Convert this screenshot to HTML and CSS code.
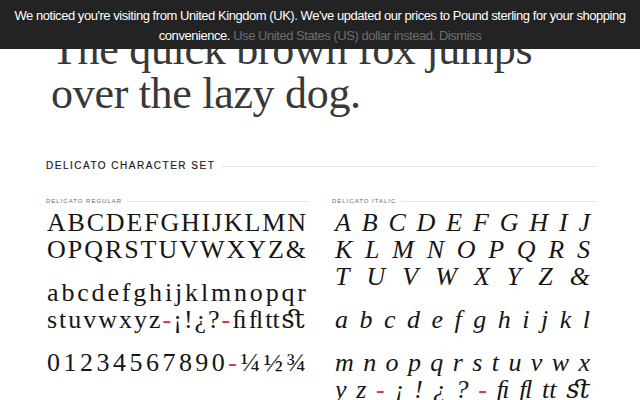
FILE: index.html
```html
<!DOCTYPE html>
<html lang="en">
<head>
<meta charset="utf-8">
<title>Delicato</title>
<link rel="stylesheet" href="styles.css">
</head>
<body>
<div class="notice">
  <p class="notice-text">We noticed you're visiting from United Kingdom (UK). We've updated our prices to Pound sterling for your shopping convenience. <a class="notice-link" href="#">Use United States (US) dollar instead.</a> <a class="notice-link" href="#">Dismiss</a></p>
</div>
<main class="page">
  <h1 class="specimen">The quick brown fox jumps<br>over the lazy dog.</h1>
  <section class="charset">
    <h2 class="section-title"><span class="section-name">DELICATO CHARACTER SET</span><span class="rule"></span></h2>
    <div class="columns">
      <div class="col regular">
        <h3 class="label"><span class="label-name">DELICATO REGULAR</span><span class="rule"></span></h3>
        <div class="block">
          <div class="row"><span>A</span><span>B</span><span>C</span><span>D</span><span>E</span><span>F</span><span>G</span><span>H</span><span>I</span><span>J</span><span>K</span><span>L</span><span>M</span><span>N</span></div>
          <div class="row"><span>O</span><span>P</span><span>Q</span><span>R</span><span>S</span><span>T</span><span>U</span><span>V</span><span>W</span><span>X</span><span>Y</span><span>Z</span><span>&amp;</span></div>
        </div>
        <div class="block">
          <div class="row"><span>a</span><span>b</span><span>c</span><span>d</span><span>e</span><span>f</span><span>g</span><span>h</span><span>i</span><span>j</span><span>k</span><span>l</span><span>m</span><span>n</span><span>o</span><span>p</span><span>q</span><span>r</span></div>
          <div class="row"><span>s</span><span>t</span><span>u</span><span>v</span><span>w</span><span>x</span><span>y</span><span>z</span><span class="dash">-</span><span>¡</span><span>!</span><span>¿</span><span>?</span><span class="dash">-</span><span>ﬁ</span><span>ﬂ</span><span>tt</span><span>ﬆ</span></div>
        </div>
        <div class="block block-last">
          <div class="row"><span>0</span><span>1</span><span>2</span><span>3</span><span>4</span><span>5</span><span>6</span><span>7</span><span>8</span><span>9</span><span>0</span><span class="dash">-</span><span>¼</span><span>½</span><span>¾</span></div>
        </div>
      </div>
      <div class="col italic">
        <h3 class="label"><span class="label-name">DELICATO ITALIC</span><span class="rule"></span></h3>
        <div class="block">
          <div class="row"><span>A</span><span>B</span><span>C</span><span>D</span><span>E</span><span>F</span><span>G</span><span>H</span><span>I</span><span>J</span></div>
          <div class="row"><span>K</span><span>L</span><span>M</span><span>N</span><span>O</span><span>P</span><span>Q</span><span>R</span><span>S</span></div>
          <div class="row"><span>T</span><span>U</span><span>V</span><span>W</span><span>X</span><span>Y</span><span>Z</span><span>&amp;</span></div>
        </div>
        <div class="block">
          <div class="row"><span>a</span><span>b</span><span>c</span><span>d</span><span>e</span><span>f</span><span>g</span><span>h</span><span>i</span><span>j</span><span>k</span><span>l</span></div>
        </div>
        <div class="block">
          <div class="row"><span>m</span><span>n</span><span>o</span><span>p</span><span>q</span><span>r</span><span>s</span><span>t</span><span>u</span><span>v</span><span>w</span><span>x</span></div>
          <div class="row"><span>y</span><span>z</span><span class="dash">-</span><span>¡</span><span>!</span><span>¿</span><span>?</span><span class="dash">-</span><span>ﬁ</span><span>ﬂ</span><span>tt</span><span>ﬆ</span></div>
        </div>
      </div>
    </div>
  </section>
</main>
</body>
</html>
```

FILE: styles.css
```css
html, body {
  margin: 0;
  padding: 0;
  background: #ffffff;
}

body {
  font-family: "Liberation Serif", "DejaVu Serif", serif;
  color: #1c1c1c;
  overflow: hidden;
}

.notice {
  position: fixed;
  top: 0;
  left: 0;
  right: 0;
  z-index: 10;
  background: #232323;
  padding: 6px 8px 3px;
  height: 40px;
}

.notice-text {
  margin: 0;
  text-align: center;
  font-family: "Liberation Sans", Arial, sans-serif;
  font-size: 13px;
  line-height: 20px;
  letter-spacing: -0.45px;
  color: #ffffff;
}

.notice-link {
  color: #6e6e6e;
  text-decoration: none;
}

.page {
  padding-top: 28px;
}

.specimen {
  margin: 0 0 0 51px;
  font-family: "Liberation Serif", "DejaVu Serif", serif;
  font-weight: normal;
  font-size: 44px;
  line-height: 44px;
  letter-spacing: -0.3px;
  color: #383838;
}

.charset {
  margin: 43px 0 0 46px;
  width: 550px;
}

.section-title {
  display: flex;
  align-items: center;
  gap: 7px;
  margin: 0;
  height: 14px;
  font-family: "Liberation Sans", Arial, sans-serif;
  font-weight: normal;
  font-size: 10px;
  line-height: 14px;
  letter-spacing: 1.5px;
  color: #1e1e1e;
  -webkit-text-stroke: 0.2px #1e1e1e;
}

.rule {
  flex: 1;
  height: 1px;
  background: #e4e4e4;
}

.columns {
  display: grid;
  grid-template-columns: 262px 264px;
  column-gap: 24px;
  margin-top: 24px;
}

.label {
  display: flex;
  align-items: center;
  gap: 5px;
  margin: 0 0 4px;
  height: 8px;
  font-family: "Liberation Sans", Arial, sans-serif;
  font-weight: normal;
  font-size: 6px;
  line-height: 8px;
  letter-spacing: 1px;
  color: #6a6a6a;
}

.block {
  margin-bottom: 16px;
}

.row {
  display: flex;
  justify-content: space-between;
  font-size: 26px;
  line-height: 27px;
  height: 27px;
  color: #161616;
}

.regular .row {
  padding: 0 2px 0 1px;
}

.italic .row {
  font-style: italic;
  padding: 0 6px 0 3px;
}

.dash {
  color: #e0323c;
}
```
